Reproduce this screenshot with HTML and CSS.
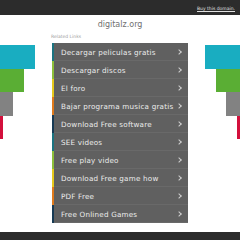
FILE: index.html
```html
<!DOCTYPE html>
<html>
<head>
<meta charset="utf-8">
<link rel="stylesheet" href="styles.css">
</head>
<body>
<div class="topbar"><a class="buy" href="#">Buy this domain.</a></div>
<div class="main">
  <div class="deco left">
    <div class="bar teal w35"></div>
    <div class="bar green w24"></div>
    <div class="bar gray w13"></div>
    <div class="bar red w3"></div>
  </div>
  <div class="center">
    <div class="title">digitalz.org</div>
    <div class="related">Related Links</div>
    <ul class="links">
      <li class="c1"><span>Decargar peliculas gratis</span><i class="chev"></i></li>
      <li class="c2"><span>Descargar discos</span><i class="chev"></i></li>
      <li class="c3"><span>El foro</span><i class="chev"></i></li>
      <li class="c4"><span>Bajar programa musica gratis</span><i class="chev"></i></li>
      <li class="c5"><span>Download Free software</span><i class="chev"></i></li>
      <li class="c1"><span>SEE videos</span><i class="chev"></i></li>
      <li class="c2"><span>Free play video</span><i class="chev"></i></li>
      <li class="c3"><span>Download Free game how</span><i class="chev"></i></li>
      <li class="c4"><span>PDF Free</span><i class="chev"></i></li>
      <li class="c5"><span>Free Onlined Games</span><i class="chev"></i></li>
    </ul>
  </div>
  <div class="deco right">
    <div class="bar teal w35"></div>
    <div class="bar green w24"></div>
    <div class="bar gray w14"></div>
    <div class="bar red w3"></div>
  </div>
</div>
<div class="footer"></div>
</body>
</html>
```
FILE: styles.css
```css
html, body { margin: 0; padding: 0; background: #fff; }
body { font-family: "DejaVu Sans", "Noto Sans", sans-serif; width: 240px; height: 240px; overflow: hidden; }
.topbar { height: 15px; background: #2c2c2c; display: flex; justify-content: flex-end; align-items: flex-end; padding-right: 5px; }
.buy { color: #e0e0e0; font-size: 4.5px; line-height: 6px; margin-bottom: 3px; text-decoration: underline; }
.main { height: 217px; display: flex; }
.deco { width: 52px; padding-top: 30px; display: flex; flex-direction: column; }
.deco.left { align-items: flex-start; }
.deco.right { align-items: flex-end; }
.bar { height: 23.5px; }
.teal { background: #19adc1; }
.green { background: #5aae34; }
.gray { background: #828282; }
.red { background: #d3103c; }
.w35 { width: 35px; }
.w24 { width: 24px; }
.w13 { width: 13px; }
.w14 { width: 14px; }
.w3 { width: 3px; }
.center { width: 136px; display: flex; flex-direction: column; }
.title { text-align: center; font-size: 8px; line-height: 12px; color: #707070; margin-top: 4px; }
.related { font-size: 4.5px; line-height: 6px; color: #a0a0a0; margin-top: 3px; margin-left: -1px; margin-bottom: 3px; }
.links { list-style: none; margin: 0; padding: 0; background: #606060; }
.links li { height: 18px; display: flex; align-items: center; justify-content: space-between; border-left: 2px solid #333; padding-left: 7px; padding-right: 6px; color: #ececec; font-size: 7.2px; letter-spacing: 0.2px; box-sizing: border-box; box-shadow: inset 0 -1px 0 rgba(255,255,255,0.06); }
.links li.c1 { border-left-color: #1b7380; }
.links li.c2 { border-left-color: #8cbf3a; }
.links li.c3 { border-left-color: #e6c91c; }
.links li.c4 { border-left-color: #e07a1c; }
.links li.c5 { border-left-color: #173a54; }
.chev { width: 3px; height: 3px; border-top: 1px solid #cfcfcf; border-right: 1px solid #cfcfcf; transform: rotate(45deg); margin-right: 1px; }
.footer { height: 8px; background: #2c2c2c; }
```
